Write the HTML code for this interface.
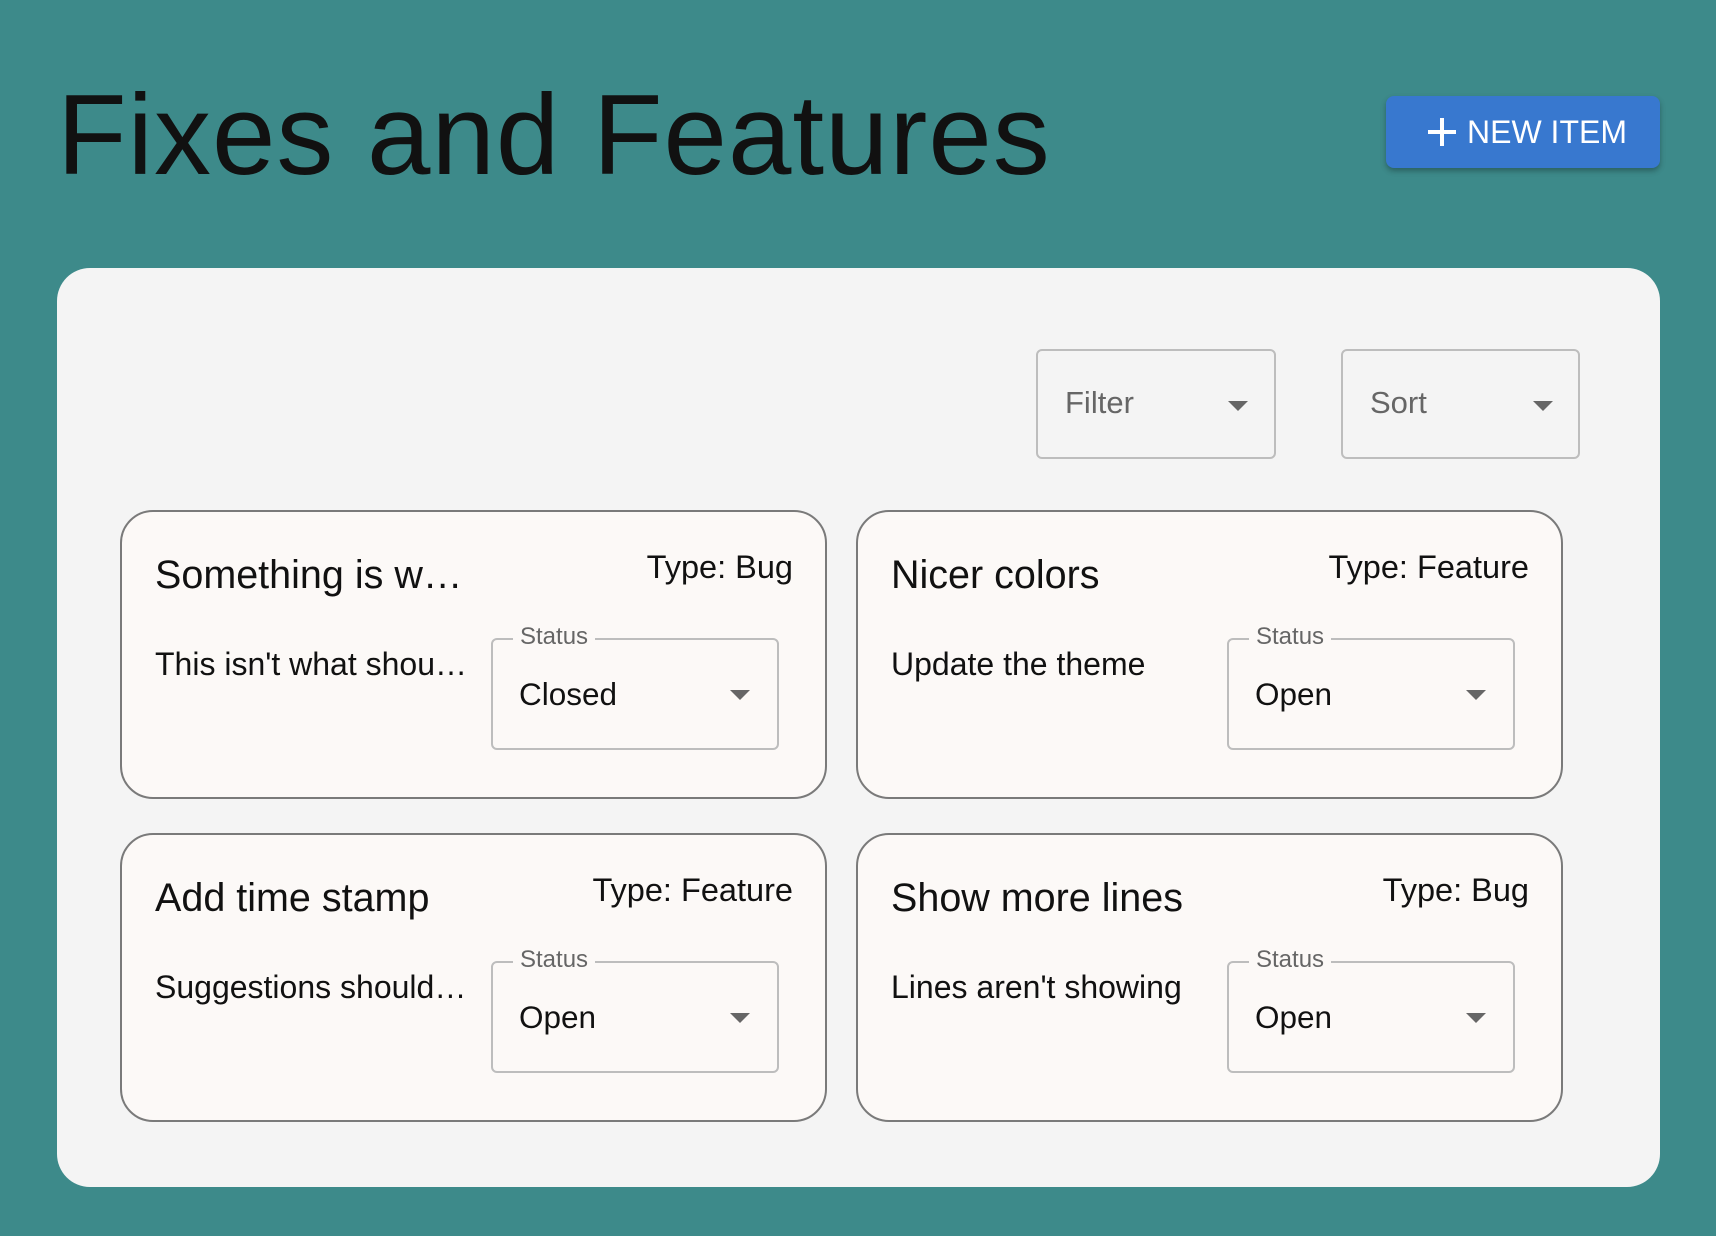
<!DOCTYPE html>
<html><head><meta charset="utf-8"><style>
*{margin:0;padding:0;box-sizing:border-box}
body{width:1716px;height:1236px;background:#3d8a8a;font-family:"Liberation Sans",Arial,sans-serif;position:relative;overflow:hidden}
.abs{position:absolute}
h1{position:absolute;left:57px;top:79px;font-size:114px;font-weight:normal;letter-spacing:1px;color:#111;line-height:114px;white-space:nowrap}
.btn{left:1386px;top:96px;width:274px;height:72px;background:#3878cf;border-radius:8px;box-shadow:0 3px 6px rgba(0,0,0,.3)}
.btn span{position:absolute;left:81px;top:16px;color:#fff;font-size:32px;line-height:40px;white-space:nowrap}
.panel{left:57px;top:268px;width:1603px;height:919px;background:#f4f4f4;border-radius:33px}
.sel{border:2px solid #bdbdbd;border-radius:6px}
.sel .t{position:absolute;left:27px;color:#666;font-size:31px;line-height:36px}
.arr{position:absolute;width:0;height:0;border-left:10px solid transparent;border-right:10px solid transparent;border-top:10px solid #666}
.card{width:707px;height:289px;border:2px solid #7a7a7a;border-radius:33px;background:#fcf9f7}
.card .ti{position:absolute;left:33px;top:41px;font-size:39.5px;line-height:44px;color:#111;white-space:nowrap}
.card .ty{position:absolute;right:32px;top:36px;font-size:32.5px;line-height:38px;color:#111;white-space:nowrap}
.card .de{position:absolute;left:33px;top:134px;font-size:32px;line-height:36px;color:#111;white-space:nowrap}
.card .st{position:absolute;left:369px;top:126px;width:288px;height:112px;border:2px solid #bdbdbd;border-radius:6px}
.card .lab{position:absolute;left:20px;top:-16px;background:#fcf9f7;padding:0 7px;font-size:24px;line-height:26px;color:#666}
.card .val{position:absolute;left:26px;top:36px;font-size:31.5px;line-height:36px;color:#111}
.card .arr{left:237px;top:50px}
</style></head><body>
<h1>Fixes and Features</h1>
<div class="abs btn">
<svg class="abs" style="left:42px;top:22px" width="28" height="28" viewBox="0 0 28 28"><path d="M14 0V28M0 14H28" stroke="#fff" stroke-width="4"/></svg>
<span>NEW ITEM</span></div>
<div class="abs panel"></div>
<div class="abs sel" style="left:1036px;top:349px;width:240px;height:110px"><span class="t" style="top:34px">Filter</span><div class="arr" style="left:190px;top:50px"></div></div>
<div class="abs sel" style="left:1341px;top:349px;width:239px;height:110px"><span class="t" style="top:34px">Sort</span><div class="arr" style="left:190px;top:50px"></div></div>

<div class="abs card" style="left:120px;top:510px"><div class="ti">Something is w…</div><div class="ty">Type: Bug</div><div class="de">This isn't what shou…</div><div class="st"><span class="lab">Status</span><span class="val">Closed</span><div class="arr"></div></div></div>
<div class="abs card" style="left:856px;top:510px"><div class="ti">Nicer colors</div><div class="ty">Type: Feature</div><div class="de">Update the theme</div><div class="st"><span class="lab">Status</span><span class="val">Open</span><div class="arr"></div></div></div>
<div class="abs card" style="left:120px;top:833px"><div class="ti">Add time stamp</div><div class="ty">Type: Feature</div><div class="de">Suggestions should…</div><div class="st"><span class="lab">Status</span><span class="val">Open</span><div class="arr"></div></div></div>
<div class="abs card" style="left:856px;top:833px"><div class="ti">Show more lines</div><div class="ty">Type: Bug</div><div class="de">Lines aren't showing</div><div class="st"><span class="lab">Status</span><span class="val">Open</span><div class="arr"></div></div></div>
</body></html>
